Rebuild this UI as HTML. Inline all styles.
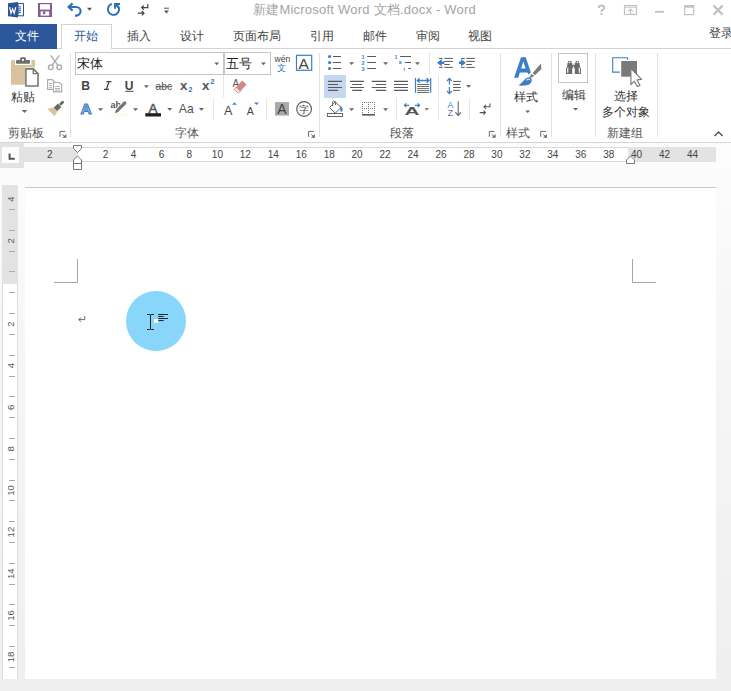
<!DOCTYPE html>
<html><head><meta charset="utf-8">
<style>
*{margin:0;padding:0;box-sizing:border-box}
html,body{width:731px;height:691px;overflow:hidden}
body{position:relative;font-family:"Liberation Sans",sans-serif;background:linear-gradient(#fcfcfc 165px,#f7f7f7 300px,#efefef 691px);color:#444}
.a{position:absolute}
.t{position:absolute;white-space:nowrap;line-height:1}
svg{position:absolute;overflow:visible}
.lbl{font-size:12px;color:#444}
.glbl{font-size:12px;color:#555}
.vsep{position:absolute;width:1px;background:#e1e1e1}
.dd{position:absolute;width:0;height:0;border-left:2.5px solid transparent;border-right:2.5px solid transparent;border-top:3px solid #777}
</style></head><body>
<!-- title bar + tabs + ribbon white -->
<div class="a" style="left:0;top:0;width:731px;height:142px;background:#fff"></div>
<!-- ribbon top line -->
<div class="a" style="left:57px;top:48px;width:674px;height:1px;background:#d4d4d4"></div>
<!-- ribbon bottom line -->
<div class="a" style="left:0;top:142px;width:731px;height:1px;background:#d4d4d4"></div>

<!-- title -->
<div class="t" style="left:253px;top:3px;font-size:13px;color:#a4a4a4;letter-spacing:0.22px">新建Microsoft Word 文档.docx - Word</div>

<!-- file tab -->
<div class="a" style="left:0;top:24px;width:57px;height:25px;background:#2b579a"></div>
<div class="t" style="left:15px;top:30px;font-size:12px;color:#fff">文件</div>
<!-- home tab -->
<div class="a" style="left:61px;top:24px;width:51px;height:25px;background:#fff;border:1px solid #d4d4d4;border-bottom:none"></div>
<div class="t" style="left:74px;top:30px;font-size:12px;color:#2b579a">开始</div>
<div class="t lbl" style="left:127px;top:30px">插入</div>
<div class="t lbl" style="left:180px;top:30px">设计</div>
<div class="t lbl" style="left:233px;top:30px">页面布局</div>
<div class="t lbl" style="left:310px;top:30px">引用</div>
<div class="t lbl" style="left:363px;top:30px">邮件</div>
<div class="t lbl" style="left:416px;top:30px">审阅</div>
<div class="t lbl" style="left:468px;top:30px">视图</div>
<div class="t lbl" style="left:709px;top:27px">登录</div>

<!-- group labels -->
<div class="t glbl" style="left:8px;top:126.5px">剪贴板</div>
<div class="t glbl" style="left:175px;top:127px">字体</div>
<div class="t glbl" style="left:390px;top:127px">段落</div>
<div class="t glbl" style="left:506px;top:127px">样式</div>
<div class="t glbl" style="left:607px;top:127px">新建组</div>
<div class="t lbl" style="left:11px;top:90.5px;color:#333">粘贴</div>
<div class="t lbl" style="left:514px;top:91px;color:#333">样式</div>
<div class="t lbl" style="left:562px;top:89px;color:#333">编辑</div>
<div class="t lbl" style="left:614px;top:90px;color:#333">选择</div>
<div class="t lbl" style="left:602px;top:106px;color:#333">多个对象</div>

<!-- group separators -->
<div class="vsep" style="left:70px;top:53px;height:84px"></div>
<div class="vsep" style="left:319px;top:53px;height:84px"></div>
<div class="vsep" style="left:500px;top:53px;height:84px"></div>
<div class="vsep" style="left:551px;top:53px;height:84px"></div>
<div class="vsep" style="left:595px;top:53px;height:84px"></div>
<div class="vsep" style="left:657px;top:53px;height:84px"></div>

<!-- font boxes -->
<div class="a" style="left:75px;top:52px;width:149px;height:23px;border:1px solid #c6c6c6;background:#fff"></div>
<div class="t" style="left:77px;top:56.5px;font-size:13px;color:#222">宋体</div>
<div class="a" style="left:224px;top:52px;width:47px;height:23px;border:1px solid #c6c6c6;background:#fff"></div>
<div class="t" style="left:226px;top:56.5px;font-size:13px;color:#222">五号</div>

<!-- ruler -->
<div class="a" style="left:0;top:143px;width:24px;height:25px;background:#e3e3e3"></div>
<div class="a" style="left:2px;top:147px;width:17px;height:16px;background:#fdfdfd"></div>
<div class="a" style="left:24px;top:147px;width:692px;height:15px;background:#e3e3e3"></div>
<div class="a" style="left:77.5px;top:147px;width:550.5px;height:15px;background:#fff;border-top:1px solid #d8d8d8;border-bottom:1px solid #d8d8d8"></div>

<!-- vertical ruler -->
<div class="a" style="left:2px;top:185px;width:16px;height:494px;background:#fff;border-left:1px solid #dcdcdc;border-right:1px solid #dcdcdc"></div>
<div class="a" style="left:2px;top:185px;width:16px;height:99px;background:#e3e3e3"></div>

<!-- page -->
<div class="a" style="left:25px;top:187px;width:691px;height:492px;background:#fff;border-top:1px solid #c8c8c8"></div>
<!-- crop marks -->
<div class="a" style="left:77px;top:259px;width:1px;height:24px;background:#a6a6a6"></div>
<div class="a" style="left:54px;top:282px;width:24px;height:1px;background:#a6a6a6"></div>
<div class="a" style="left:632px;top:259px;width:1px;height:24px;background:#a6a6a6"></div>
<div class="a" style="left:632px;top:282px;width:24px;height:1px;background:#a6a6a6"></div>

<!-- circle -->
<div class="a" style="left:126px;top:291px;width:60px;height:60px;border-radius:50%;background:#88d7fb"></div>


<!-- ICONS OVERLAY -->
<svg width="731" height="691" style="left:0;top:0" viewBox="0 0 731 691">
<!-- word icon -->
<path d="M8 3.2 L18 2 L18 17.4 L8 16.2 Z" fill="#2b579a"/>
<rect x="18" y="3.6" width="5.5" height="12.2" fill="#fff" stroke="#2b579a" stroke-width="1"/>
<g stroke="#2b579a" stroke-width="1"><path d="M18 6.8H21M18 8.8H21M18 10.7H21M18 12.6H21"/></g>
<path d="M9.6 7.2 L11 13.2 L12.6 9 L14.2 13.2 L15.8 7.2" fill="none" stroke="#fff" stroke-width="1.2"/>
<!-- save -->
<rect x="38" y="3" width="14" height="14" fill="#855c98"/>
<rect x="40" y="4.2" width="10" height="5.4" fill="#fff"/>
<rect x="40.6" y="11.4" width="8.6" height="4.2" fill="#fff"/>
<rect x="43" y="11.4" width="2.3" height="2.8" fill="#855c98"/>
<!-- undo -->
<path d="M68.5 7 H76.2 A4.4 4.3 0 0 1 76.2 15.6 H75" fill="none" stroke="#2e6fb7" stroke-width="2.1"/>
<path d="M72.6 3.4 L68.6 7 L72.6 10.6" fill="none" stroke="#2e6fb7" stroke-width="2.1"/>
<path d="M87 7.8 H92 L89.5 10.7 Z" fill="#555"/>
<!-- redo -->
<path d="M111.9 3.9 A5.6 5.6 0 1 0 117.9 5.8" fill="none" stroke="#2e6fb7" stroke-width="1.9"/>
<path d="M115 8.7 V4 H120" fill="none" stroke="#2e6fb7" stroke-width="1.9"/>
<path d="M115 4 L118.6 7.4" stroke="#2e6fb7" stroke-width="2"/>
<!-- repeat/typing -->
<g fill="none" stroke="#444" stroke-width="1.2">
<path d="M147.8 4 V7.6 H141.6 M143.8 5.4 L141.6 7.6 L143.8 9.8"/>
<path d="M138 13.2 H144 M141.8 11 L144 13.2 L141.8 15.4"/>
</g>
<path d="M164 8.2 H169" stroke="#555" stroke-width="1"/>
<path d="M164 10.4 H169 L166.5 13.6 Z" fill="#555"/>
<!-- window controls -->
<g fill="none" stroke="#c2c2c2">
<rect x="624.5" y="5.5" width="12" height="9" stroke-width="1.2"/>
<path d="M624.5 7.2 H636.5" stroke-width="1"/>
<path d="M630.5 14.5 V9.2 M628.2 11.4 L630.5 9.1 L632.8 11.4" stroke-width="1.1"/>
<path d="M655 11.8 H664" stroke-width="1.8"/>
<rect x="684.6" y="5.6" width="9" height="9" stroke-width="1.2"/>
<path d="M684.6 6.6 H693.6" stroke-width="2.2"/>
<path d="M713.6 5.6 L722.6 14.6 M722.6 5.6 L713.6 14.6" stroke-width="2.2"/>
</g>
<path d="M598.8 8 Q598.8 5.6 601.4 5.6 Q604.2 5.6 604.2 7.8 Q604.2 9.2 602.6 9.9 Q601.5 10.4 601.5 12" fill="none" stroke="#c2c2c2" stroke-width="2"/><rect x="600.4" y="13" width="2.2" height="1.9" fill="#c2c2c2"/>

<!-- clipboard paste -->
<path d="M11 60 H15 V65 H31.4 V60 H35 V67.5 H25 V84.7 H11 Z" fill="#d9c39d"/>
<rect x="16" y="60.1" width="14" height="3.7" rx="0.8" fill="#6f6f6f"/>
<rect x="20.1" y="57.2" width="5.8" height="3.5" rx="1" fill="#6f6f6f"/>
<rect x="22" y="59" width="2" height="1.8" fill="#fff"/>
<path d="M25.9 68.9 H33.3 L38 73.6 V86 H25.9 Z" fill="#fff" stroke="#777" stroke-width="1.6"/>
<path d="M33.3 68.9 V73.6 H38" fill="none" stroke="#777" stroke-width="1.4"/>
<!-- cut -->
<g fill="none" stroke="#a9a9a9" stroke-width="1.3">
<path d="M50.6 55.4 L57.6 64.8 M59.4 55.4 L52.4 64.8"/>
<circle cx="50.8" cy="67.2" r="2.4"/>
<circle cx="59.2" cy="67.2" r="2.4"/>
</g>
<!-- copy -->
<g fill="#fff" stroke="#a9a9a9" stroke-width="1.1">
<path d="M47.6 79.6 H52.2 L54.6 82 V89.4 H47.6 Z"/>
<path d="M53.5 82.5 H59.4 L61.7 84.8 V91.9 H53.5 Z"/>
<path d="M49 83.5 H52 M49 85.5 H52 M49 87.5 H52 M55 86.5 H60 M55 88.5 H60 M55 90.2 H60" stroke-width="0.9"/>
</g>
<!-- format painter -->
<path d="M55.4 109.4 L59.6 105.2" stroke="#6a6a6a" stroke-width="5"/>
<path d="M60.8 104 L62.6 102.2" stroke="#6a6a6a" stroke-width="2.8" stroke-linecap="round"/>
<path d="M47.4 108.8 L53.4 107.4 L57.4 111.4 L54.6 116.2 Z" fill="#d9c39d"/>
<!-- launchers -->
<path d="M60.0 136.8 V131.4 H65.2" fill="none" stroke="#6a6a6a" stroke-width="1"/><path d="M62.3 137.8 H66.3 V134.1 Z" fill="#6a6a6a"/><path d="M62.5 134.3 L64.5 136.3" stroke="#6a6a6a" stroke-width="1"/>
<path d="M308.6 136.8 V131.4 H313.8" fill="none" stroke="#6a6a6a" stroke-width="1"/><path d="M310.9 137.8 H314.9 V134.1 Z" fill="#6a6a6a"/><path d="M311.1 134.3 L313.1 136.3" stroke="#6a6a6a" stroke-width="1"/>
<path d="M489.3 136.8 V131.4 H494.5" fill="none" stroke="#6a6a6a" stroke-width="1"/><path d="M491.6 137.8 H495.6 V134.1 Z" fill="#6a6a6a"/><path d="M491.8 134.3 L493.8 136.3" stroke="#6a6a6a" stroke-width="1"/>
<path d="M540.7 136.8 V131.4 H545.9" fill="none" stroke="#6a6a6a" stroke-width="1"/><path d="M543.0 137.8 H547.0 V134.1 Z" fill="#6a6a6a"/><path d="M543.2 134.3 L545.2 136.3" stroke="#6a6a6a" stroke-width="1"/>
</svg>


<svg width="731" height="691" style="left:0;top:0" viewBox="0 0 731 691">
<!-- paste dd -->
<path d="M21.7 110 H27.2 L24.45 113 Z" fill="#666"/>
<!-- font box dd -->
<path d="M214.3 62.4 H219.2 L216.75 65.2 Z" fill="#666"/>
<path d="M261 62.4 H265.9 L263.45 65.2 Z" fill="#666"/>
<!-- wen -->
<text x="274.6" y="62.2" font-family="Liberation Sans" font-size="8.2" fill="#444" textLength="15.6" lengthAdjust="spacingAndGlyphs">wén</text>
<text x="277" y="71" font-family="Liberation Sans" font-size="9" fill="#2e6fb7">文</text>
<!-- bordered A -->
<rect x="296.5" y="55.3" width="15.2" height="15" fill="none" stroke="#3c7fc4" stroke-width="1.2"/>
<text x="298.4" y="68.8" font-family="Liberation Sans" font-size="15.5" fill="#444">A</text>
<!-- B I U -->
<text x="81.2" y="89.8" font-family="Liberation Sans" font-weight="bold" font-size="12.2" fill="#444">B</text>
<path d="M106.4 81.7 H111.4 M103.9 89.3 H108.9 M108.9 81.7 L106.4 89.3" fill="none" stroke="#444" stroke-width="1.3"/>
<text x="124.8" y="89.8" font-family="Liberation Sans" font-weight="bold" font-size="12" fill="#444">U</text>
<rect x="125.3" y="90.8" width="8.2" height="1" fill="#444"/>
<path d="M143.9 85.2 H148.9 L146.4 88 Z" fill="#666"/>
<!-- abc -->
<text x="155.6" y="90" font-family="Liberation Sans" font-size="11" fill="#555" textLength="16.4" lengthAdjust="spacingAndGlyphs">abc</text>
<rect x="155.6" y="86.2" width="16.6" height="1" fill="#555"/>
<!-- x2 -->
<text x="180" y="90.2" font-family="Liberation Sans" font-weight="bold" font-size="13.4" fill="#555">x</text>
<text x="188.6" y="92.2" font-family="Liberation Sans" font-weight="bold" font-size="6.8" fill="#2e6fb7">2</text>
<text x="202" y="90.2" font-family="Liberation Sans" font-weight="bold" font-size="13.4" fill="#555">x</text>
<text x="210.6" y="84.2" font-family="Liberation Sans" font-weight="bold" font-size="6.8" fill="#2e6fb7">2</text>
<!-- eraser -->
<text x="232.4" y="86.9" font-family="Liberation Sans" font-size="10" fill="#555">A</text>
<path d="M242.2 80.6 L246.6 84.6 L240.4 91.2 L236 87.2 Z" fill="#d08a86"/>
<path d="M236 87.2 L240.4 91.2 L238.4 93.2 L234 89.2 Z" fill="#f6e3e0" stroke="#d08a86" stroke-width="0.9"/>
<!-- text effects A -->
<text x="80.6" y="114" font-family="Liberation Sans" font-weight="bold" font-size="15.4" fill="#9cc0e8" stroke="#3a7bc2" stroke-width="1" stroke-linejoin="round">A</text>
<path d="M98 108.3 H103.1 L100.55 111 Z" fill="#666"/>
<!-- highlight -->
<text x="110.6" y="107.8" font-family="Liberation Sans" font-weight="bold" font-size="9" fill="#555">ab</text>
<path d="M118.2 109.6 L124.6 103.2" stroke="#fff" stroke-width="5"/>
<path d="M118.2 109.6 L124.8 103" stroke="#777" stroke-width="3.2" stroke-linecap="round"/>
<path d="M116.4 109.6 L118.8 112 L114.8 113 Z" fill="#666"/>
<rect x="111" y="113.4" width="16" height="3" fill="#fbfbe6"/>
<path d="M133 108.3 H138.1 L135.55 111 Z" fill="#666"/>
<!-- font color -->
<text x="148.4" y="113" font-family="Liberation Sans" font-size="13.4" fill="#555" stroke="#555" stroke-width="0.5">A</text>
<rect x="145.3" y="113.2" width="15.7" height="3.3" fill="#1e1e1e"/>
<path d="M167.2 108 H172.2 L169.7 110.8 Z" fill="#666"/>
<!-- Aa -->
<text x="178.8" y="112.8" font-family="Liberation Sans" font-size="12.2" fill="#555">Aa</text>
<path d="M198.9 108 H204 L201.45 110.8 Z" fill="#666"/>
<!-- grow / shrink -->
<text x="224" y="114.7" font-family="Liberation Sans" font-size="12.6" fill="#444">A</text>
<path d="M232.2 104.8 L234.5 102.3 L236.8 104.8 Z" fill="#3c7fc4"/>
<text x="246.8" y="114.7" font-family="Liberation Sans" font-size="10.6" fill="#444">A</text>
<path d="M254 102.6 H259 L256.5 104.9 Z" fill="#3c7fc4"/>
<!-- shaded A -->
<rect x="275" y="102.1" width="14" height="13.5" fill="#a9a9a9"/>
<text x="277.3" y="114" font-family="Liberation Sans" font-size="14" fill="#3f3f3f">A</text>
<!-- circle zi -->
<circle cx="304.1" cy="109" r="7.4" fill="none" stroke="#555" stroke-width="1.1"/>
<text x="299" y="113.2" font-family="Liberation Sans" font-size="10.2" fill="#444">字</text>
</svg>
<!-- font group separators -->
<div class="vsep" style="left:223px;top:75px;height:22px;background:#e6e6e6"></div>
<div class="vsep" style="left:213px;top:98px;height:22px;background:#e6e6e6"></div>
<div class="vsep" style="left:266px;top:98px;height:22px;background:#e6e6e6"></div>


<svg width="731" height="691" style="left:0;top:0" viewBox="0 0 731 691">
<!-- bullets -->
<g fill="#3c7fc4"><circle cx="329.6" cy="56.5" r="1.6"/><circle cx="329.6" cy="62.5" r="1.6"/><circle cx="329.6" cy="68.5" r="1.6"/></g>
<g stroke="#5a5a5a" stroke-width="1"><path d="M333 56.5H341M333 62.5H341M333 68.5H341"/></g>
<path d="M349.1 62.2 H354.1 L351.6 65 Z" fill="#666"/>
<!-- numbering -->
<g font-family="Liberation Sans" font-weight="bold" font-size="5.6" fill="#3c7fc4"><text x="361.6" y="58.9">1</text><text x="361.6" y="64.9">2</text><text x="361.6" y="70.9">3</text></g>
<g stroke="#5a5a5a" stroke-width="1"><path d="M367.2 56.5H376M367.2 62.5H376M367.2 68.5H376"/></g>
<path d="M383.1 62.2 H388.1 L385.6 65 Z" fill="#666"/>
<!-- multilevel -->
<g font-family="Liberation Sans" font-weight="bold" font-size="5.2" fill="#3c7fc4"><text x="394.6" y="58.8">1</text><text x="398.8" y="64.4">a</text><text x="403.4" y="71">i</text></g>
<g stroke="#5a5a5a" stroke-width="1"><path d="M400.1 56.5H411M405 62.5H411M408.3 68.5H411"/></g>
<path d="M414.9 62.2 H419.9 L417.4 65 Z" fill="#666"/>
<!-- indent -->
<g stroke="#5a5a5a" stroke-width="1">
<path d="M439 58.4H442.7M444.3 58.4H452.9M444.3 61.4H452.9M444.3 64.5H449.7M439 67.4H442.7M444.3 67.4H452.9"/>
<path d="M461.1 58.4H464.8M466.3 58.4H474.9M466.3 61.4H474.9M466.3 64.5H471.8M461.1 67.4H464.8M466.3 67.4H474.9"/>
</g>
<path d="M437 62.8 L441.8 58.9 L441.8 61.6 H444.4 V64 H441.8 L441.8 66.6 Z" fill="#3c7fc4"/>
<path d="M465.9 62.8 L461.1 58.9 L461.1 61.6 H459 V64 H461.1 L461.1 66.6 Z" fill="#3c7fc4"/>
<!-- align selected bg -->
<rect x="324" y="75" width="22" height="23" fill="#c5d8f1"/>
<g stroke="#5a5a5a" stroke-width="1.1">
<path d="M327.9 81.4H342M327.9 84.5H338M327.9 87.5H342M327.9 90.4H338"/>
<path d="M350.1 81.4H363.9M352.2 84.5H362.1M350.1 87.5H363.9M352.2 90.4H362.1"/>
<path d="M371.7 81.4H386.3M375.8 84.5H386.3M371.7 87.5H386.3M375.8 90.4H386.3"/>
<path d="M394 81.4H408M394 84.5H408M394 87.5H408M394 90.4H408"/>
<path d="M417.1 84.5H429.1M417.1 86.5H429.1M417.1 88.6H429.1M417.1 90.6H429.1M417.1 92.5H429.1" stroke-width="0.9"/>
</g>
<!-- distributed -->
<g stroke="#3c7fc4" stroke-width="1.2" fill="none">
<path d="M415.5 77.9V92.7M430.7 77.9V92.7"/>
<path d="M417.4 80.5H428.9M419.6 78.2L417.3 80.5L419.6 82.8M426.7 78.2L429 80.5L426.7 82.8" stroke-width="1.3"/>
</g>
<!-- line spacing -->
<g stroke="#3c7fc4" stroke-width="1.2" fill="none">
<path d="M449.4 78.6V84.5M449.4 87V93.4M447 81L449.4 78.4L451.8 81M447 91L449.4 93.6L451.8 91"/>
</g>
<g stroke="#5a5a5a" stroke-width="1"><path d="M453.2 81.4H460.9M453.2 84.5H459.9M453.2 87.5H460.9M453.2 90.4H459.9"/></g>
<path d="M466.1 85 H471.1 L468.6 87.8 Z" fill="#666"/>
<!-- shading -->
<g fill="none" stroke="#666" stroke-width="1">
<path d="M335.3 101.8 L341 107.5 L335.2 113.2 L329.5 107.5 Z" fill="#fff"/>
<path d="M332.6 106 V102.2 Q332.6 101.3 333.5 101.3 H334.6 Q335.5 101.3 335.5 102.2 V105"/>
<rect x="327.4" y="113.5" width="15.2" height="3"/>
</g>
<path d="M339.8 105.4 Q343.4 107.6 342.4 111 Q341.6 112.4 340.6 111.4 Z" fill="#3c7fc4"/>
<path d="M349.1 108.2 H354.1 L351.6 111 Z" fill="#666"/>
<!-- borders -->
<g fill="#777">
<rect x="362" y="102" width="1" height="1"/><rect x="364" y="102" width="1" height="1"/><rect x="366" y="102" width="1" height="1"/><rect x="368" y="102" width="1" height="1"/><rect x="370" y="102" width="1" height="1"/><rect x="372" y="102" width="1" height="1"/><rect x="374" y="102" width="1" height="1"/>
<rect x="362" y="104" width="1" height="1"/><rect x="368" y="104" width="1" height="1"/><rect x="374" y="104" width="1" height="1"/>
<rect x="362" y="106" width="1" height="1"/><rect x="368" y="106" width="1" height="1"/><rect x="374" y="106" width="1" height="1"/>
<rect x="362" y="108" width="1" height="1"/><rect x="364" y="108" width="1" height="1"/><rect x="366" y="108" width="1" height="1"/><rect x="368" y="108" width="1" height="1"/><rect x="370" y="108" width="1" height="1"/><rect x="372" y="108" width="1" height="1"/><rect x="374" y="108" width="1" height="1"/>
<rect x="362" y="110" width="1" height="1"/><rect x="368" y="110" width="1" height="1"/><rect x="374" y="110" width="1" height="1"/>
<rect x="362" y="112" width="1" height="1"/><rect x="368" y="112" width="1" height="1"/><rect x="374" y="112" width="1" height="1"/>
<rect x="362" y="114" width="13" height="1.6" fill="#5a5a5a"/>
</g>
<path d="M383.1 108.2 H388.1 L385.6 111 Z" fill="#666"/>
<!-- chinese layout -->
<text x="404.6" y="114.6" font-family="Liberation Sans" font-weight="bold" font-size="11" fill="#555" textLength="15" lengthAdjust="spacingAndGlyphs">A</text>
<g stroke="#3c7fc4" stroke-width="1.2" fill="none"><path d="M404.4 105.3H409.2M406.3 103.4L404.4 105.3L406.3 107.2M414.8 105.3H419.6M417.7 103.4L419.6 105.3L417.7 107.2"/></g>
<path d="M424.5 108.3 H429 L426.75 110.6 Z" fill="#666"/>
<!-- sort -->
<text x="447.6" y="107.6" font-family="Liberation Sans" font-size="8.6" fill="#3c7fc4">A</text>
<text x="447.8" y="115.8" font-family="Liberation Sans" font-size="8.6" fill="#8a5aa0">Z</text>
<g stroke="#666" stroke-width="1.1" fill="none"><path d="M458.2 101.2V115.4M455.4 112.4L458.2 115.4L461 112.4"/></g>
<!-- typography -->
<g fill="none" stroke="#555" stroke-width="1.1">
<path d="M489.9 103.5 V106.8 H484 M486 104.8 L484 106.8 L486 108.8"/>
<path d="M479.7 112.6 H485.4 M483.4 110.6 L485.4 112.6 L483.4 114.6"/>
</g>
<!-- styles icon -->
<path d="M521 57.2 H525.7 L530.9 72.6 L528.4 74.4 L527.4 72.6 H519.8 L518.4 77.8 H514.1 Z M523.3 61.4 L521.2 68.5 H525.6 Z" fill="#3c7fc4" fill-rule="evenodd"/>
<path d="M541 63.6 L541.4 69 L535 75.2 L532.6 73 Z" fill="#7a7a7a"/>
<path d="M531.8 73.8 L534.2 76 L530.4 78 L529.6 77 Z" fill="#7a7a7a"/>
<path d="M518.7 85.6 L525.8 78.4 Q529.8 76 531.6 78.8 Q532.6 82.4 528.6 84.8 Q524 86 518.7 85.6 Z" fill="#3c7fc4"/>
<path d="M526.4 80.2 Q528.6 78.4 530 79.8" fill="none" stroke="#fff" stroke-width="1"/>
<path d="M525.2 110.4 H530.2 L527.7 113.1 Z" fill="#666"/>
<!-- edit box -->
<rect x="558.5" y="53.5" width="29" height="29" fill="none" stroke="#c6c6c6" stroke-width="1"/>
<g fill="#6a6a6a">
<path d="M568.2 61 H571.4 V63 H572.2 V64.8 H573.6 V68.2 H572.2 V73.9 H566 V67.4 H567 V65.3 H567.4 V63 H568.2 Z"/>
<path d="M575.6 61 H578.8 V63 H579.6 V65.3 H580 V67.4 H580.9 V73.9 H574.8 V68.2 H573.4 V64.8 H574.8 V63 H575.6 Z"/>
</g>
<g fill="#fff"><rect x="567.2" y="67.5" width="1.1" height="5.4"/><rect x="578.7" y="67.5" width="1.1" height="5.4"/><circle cx="569.6" cy="62.4" r="0.8"/><circle cx="577.4" cy="62.4" r="0.8"/><circle cx="573.5" cy="67.2" r="0.8"/></g>
<path d="M573 108 H578.1 L575.55 110.6 Z" fill="#666"/>
<!-- select objects -->
<path d="M627.6 59.8 V57.7 H612.7 V72.1 H619.8" fill="none" stroke="#3c7fc4" stroke-width="1.1"/>
<rect x="621.2" y="61" width="15.8" height="15.7" fill="#7a7a7a"/>
<path d="M630.9 68.4 V84.5 L634.3 81.4 L637.4 86.6 L640 85.2 L637 80 L641.5 79.4 Z" fill="#fff" stroke="#777" stroke-width="1.1" stroke-linejoin="miter"/>
<!-- collapse -->
<path d="M714.6 136 L718.6 132 L722.6 136" fill="none" stroke="#555" stroke-width="1.5"/>
</svg>
<!-- paragraph separators -->
<div class="vsep" style="left:429px;top:52px;height:22px;background:#e6e6e6"></div>
<div class="vsep" style="left:438px;top:75px;height:22px;background:#e6e6e6"></div>
<div class="vsep" style="left:396px;top:98px;height:22px;background:#e6e6e6"></div>
<div class="vsep" style="left:438px;top:98px;height:22px;background:#e6e6e6"></div>
<div class="vsep" style="left:469px;top:98px;height:22px;background:#e6e6e6"></div>

<svg width="731" height="691" style="left:0;top:0" viewBox="0 0 731 691">
<g font-family="Liberation Sans" font-size="10" fill="#444" text-anchor="middle">
<text x="49.7" y="158">2</text>
<text x="105.6" y="158">2</text>
<text x="133.6" y="158">4</text>
<text x="161.5" y="158">6</text>
<text x="189.4" y="158">8</text>
<text x="217.4" y="158">10</text>
<text x="245.3" y="158">12</text>
<text x="273.3" y="158">14</text>
<text x="301.2" y="158">16</text>
<text x="329.2" y="158">18</text>
<text x="357.1" y="158">20</text>
<text x="385.1" y="158">22</text>
<text x="413.0" y="158">24</text>
<text x="441.0" y="158">26</text>
<text x="469.0" y="158">28</text>
<text x="496.9" y="158">30</text>
<text x="524.9" y="158">32</text>
<text x="552.8" y="158">34</text>
<text x="580.8" y="158">36</text>
<text x="608.7" y="158">38</text>
<text x="636.6" y="158">40</text>
<text x="664.6" y="158">42</text>
<text x="692.5" y="158">44</text>
</g>
<path d="M9.6 153.4 V158.8 H14.8" fill="none" stroke="#555" stroke-width="2"/>
<path d="M73.5 145.5 H81.5 V148.5 L77.5 152.5 L73.5 148.5 Z" fill="#fff" stroke="#777" stroke-width="1"/>
<path d="M77.5 156 L81.5 160 V169.5 H73.5 V160 Z" fill="#fff" stroke="#777" stroke-width="1"/><path d="M73.5 163.5 H81.5" stroke="#777" stroke-width="1"/>

<path d="M630.5 156 L634.5 160 V163.5 H626.5 V160 Z" fill="#fff" stroke="#777" stroke-width="1"/>
<g font-family="Liberation Sans" font-size="9.6" fill="#555" text-anchor="middle">
<text transform="translate(13.5,199.2) rotate(-90)" x="0" y="0">4</text>
<text transform="translate(13.5,240.8) rotate(-90)" x="0" y="0">2</text>
<text transform="translate(13.5,324.0) rotate(-90)" x="0" y="0">2</text>
<text transform="translate(13.5,365.6) rotate(-90)" x="0" y="0">4</text>
<text transform="translate(13.5,407.3) rotate(-90)" x="0" y="0">6</text>
<text transform="translate(13.5,448.9) rotate(-90)" x="0" y="0">8</text>
<text transform="translate(13.5,490.5) rotate(-90)" x="0" y="0">10</text>
<text transform="translate(13.5,532.1) rotate(-90)" x="0" y="0">12</text>
<text transform="translate(13.5,573.7) rotate(-90)" x="0" y="0">14</text>
<text transform="translate(13.5,615.4) rotate(-90)" x="0" y="0">16</text>
<text transform="translate(13.5,657.0) rotate(-90)" x="0" y="0">18</text>
</g>
<g stroke="#ababab" stroke-width="1">
<path d="M9 209.5H15"/>
<path d="M9 230.5H15"/>
<path d="M9 251.5H15"/>
<path d="M9 271.5H15"/>
<path d="M9 292.5H15"/>
<path d="M9 313.5H15"/>
<path d="M9 334.5H15"/>
<path d="M9 355.5H15"/>
<path d="M9 376.5H15"/>
<path d="M9 396.5H15"/>
<path d="M9 417.5H15"/>
<path d="M9 438.5H15"/>
<path d="M9 459.5H15"/>
<path d="M9 480.5H15"/>
<path d="M9 500.5H15"/>
<path d="M9 521.5H15"/>
<path d="M9 542.5H15"/>
<path d="M9 563.5H15"/>
<path d="M9 584.5H15"/>
<path d="M9 604.5H15"/>
<path d="M9 625.5H15"/>
<path d="M9 646.5H15"/>
<path d="M9 667.5H15"/>
</g>
<g fill="none" stroke="#666" stroke-width="1"><path d="M84.7 316.2 V319.6 H78.8 M81 317.4 L78.8 319.6 L81 321.8"/></g>
<g stroke="#222" stroke-width="1" fill="none"><path d="M147 314.5H149.9M151.1 314.5H154M150.5 314.5V329.5M147 329.5H149.9M151.1 329.5H154"/></g>
<g stroke="#222" stroke-width="1"><path d="M158.2 314.5H168M158.2 316.5H163.7M158.2 318.5H168M158.2 320.5H163.7"/></g>
<rect x="154" y="319" width="4.2" height="3.8" fill="#fff"/>
</svg>
</body></html>
